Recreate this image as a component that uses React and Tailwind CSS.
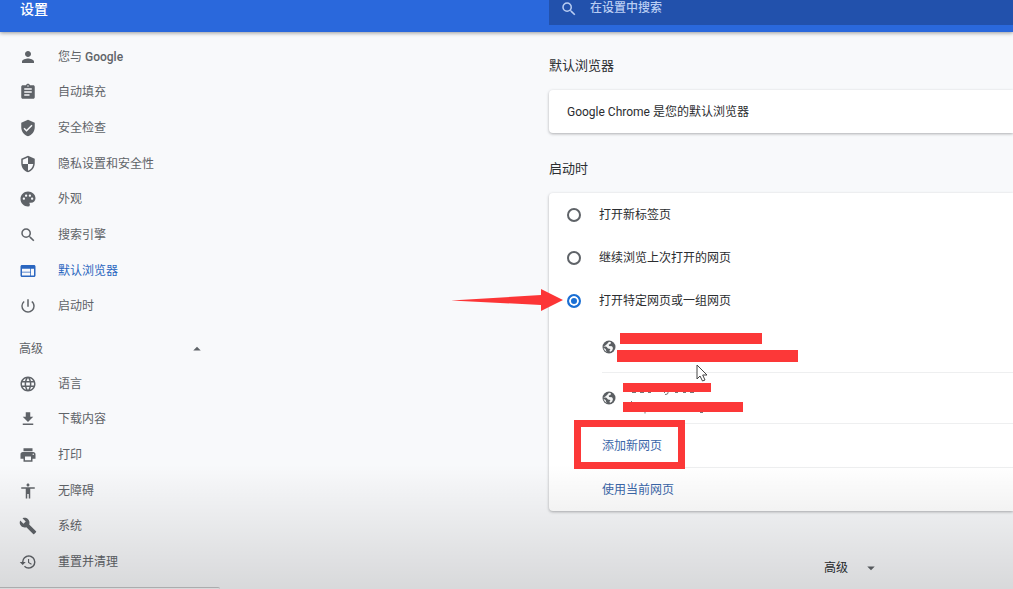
import { useState } from 'react';
import {
  MdAccessibility,
  MdArrowDropDown,
  MdArrowDropUp,
  MdAssignment,
  MdBuild,
  MdFileDownload,
  MdLanguage,
  MdPalette,
  MdPerson,
  MdPowerSettingsNew,
  MdPrint,
  MdRestore,
  MdSearch,
  MdSecurity,
  MdVerifiedUser,
  MdWeb,
} from 'react-icons/md';

const basicItems = [
  { id: 'people', label: <>您与 <span className="font-medium">Google</span></>, icon: MdPerson },
  { id: 'autofill', label: '自动填充', icon: MdAssignment },
  { id: 'safety', label: '安全检查', icon: MdVerifiedUser },
  { id: 'privacy', label: '隐私设置和安全性', icon: MdSecurity },
  { id: 'appearance', label: '外观', icon: MdPalette },
  { id: 'search', label: '搜索引擎', icon: MdSearch },
  { id: 'default', label: '默认浏览器', icon: MdWeb },
  { id: 'startup', label: '启动时', icon: MdPowerSettingsNew },
];

const advancedItems = [
  { id: 'languages', label: '语言', icon: MdLanguage },
  { id: 'downloads', label: '下载内容', icon: MdFileDownload },
  { id: 'printing', label: '打印', icon: MdPrint },
  { id: 'a11y', label: '无障碍', icon: MdAccessibility },
  { id: 'system', label: '系统', icon: MdBuild },
  { id: 'reset', label: '重置并清理', icon: MdRestore },
];

const startupOptions = ['打开新标签页', '继续浏览上次打开的网页', '打开特定网页或一组网页'];

// default favicon: dark globe with light land
function GlobeIcon() {
  return (
    <svg viewBox="0 0 14 14" className="size-[14px]" aria-hidden="true">
      <circle cx="7" cy="7" r="6.500" fill="#5a5e62" />
      <path d="M7 1.800 9 2.200 8.500 4 6.800 4.600 7 6l3 .3L11 8l-.8 2.500L8 12l-.5-1.500L8.500 9 6 8.500 4.500 6.800 1.800 6.200l-.2 1.500 2.200 1.500.4 1.800 1.300.9C3 11.500 1.400 9.300 1.500 6.800L4 5l1.500-1.500z" fill="#f4f5f5" />
    </svg>
  );
}

function MenuItem({ item, active }) {
  const Icon = item.icon;
  return (
    <li className="flex items-center">
      <a href={`#${item.id}`} className={`flex items-center gap-[21px] pl-[19px] ${active ? 'text-[#2a66c0]' : 'text-[#5f6368]'}`}>
        <Icon className="size-[18px]" />
        <span>{item.label}</span>
      </a>
    </li>
  );
}

export default function App() {
  const [startup, setStartup] = useState(2);

  return (
    <div className="relative min-h-screen overflow-hidden bg-[#f8f9fb] font-['Roboto','Noto_Sans_CJK_SC',sans-serif] text-xs leading-4 text-[#2b2d30]">
      <header className="grid h-8 grid-cols-[549px_1fr] items-start bg-[#2a68dc] shadow-[0_1px_4px_rgba(0,0,0,0.4)]">
        <h1 className="pl-5 text-sm leading-[18px] font-medium text-white">设置</h1>
        <label className="flex h-[25px] items-start gap-3 bg-[#2251ac] pl-[11px] text-[#b9cdf3]">
          <MdSearch className="size-[18px]" />
          <input type="search" aria-label="在设置中搜索" placeholder="在设置中搜索" className="h-4 flex-1 bg-transparent font-medium outline-none placeholder:text-[#b9cdf3]" />
        </label>
      </header>

      <div className="grid grid-cols-[549px_1fr]">
        <nav className="pt-[7px]">
          <ul className="grid h-[285px] auto-rows-fr">
            {basicItems.map(item => <MenuItem key={item.id} item={item} active={item.id === 'default'} />)}
          </ul>
          <button type="button" className="flex h-[42px] w-[206px] items-center justify-between pt-2 pl-[19px] text-[#5f6368]">
            高级
            <MdArrowDropUp className="size-[18px]" />
          </button>
          <ul className="grid h-[214px] auto-rows-fr">
            {advancedItems.map(item => <MenuItem key={item.id} item={item} />)}
          </ul>
        </nav>

        <main className="pt-6">
          <section>
            <h2 className="text-[13px] leading-5">默认浏览器</h2>
            <div className="mt-[14px] flex h-[43px] items-center rounded-l bg-white pl-[18px] shadow-[0_1px_3px_rgba(60,64,67,0.4)]">Google Chrome 是您的默认浏览器</div>
          </section>

          <section className="mt-[26px]">
            <h2 className="text-[13px] leading-5">启动时</h2>
            <div className="mt-[14px] rounded-l bg-white shadow-[0_1px_3px_rgba(60,64,67,0.4)]">
              <div className="relative">
                {startupOptions.map((option, i) => (
                  <label key={option} className="flex h-[43px] items-center gap-[18px] pl-[18px]">
                    <input
                      type="radio"
                      name="startup"
                      checked={startup === i}
                      onChange={() => setStartup(i)}
                      className="size-[14px] appearance-none rounded-full border-2 border-[#5f6368] checked:border-[#1a6fd4] checked:bg-[#1a6fd4] checked:shadow-[inset_0_0_0_2px_white]"
                    />
                    {option}
                  </label>
                ))}
                <svg viewBox="0 0 112 24" className="absolute bottom-[10px] -left-[98px] h-6 w-28" aria-hidden="true">
                  <path d="M0 12.500 90 7V1l22 11-22 11v-6z" fill="#fc3536" />
                </svg>
              </div>

              <div className="ml-[53px]">
                <div className="relative flex h-[51px] items-center border-b border-[#eeeff0]">
                  <GlobeIcon />
                  <div className="absolute top-[11px] left-[18px] h-[11px] w-[142px] bg-[#fc3838]" />
                  <div className="absolute top-7 left-[15px] h-3 w-[181px] bg-[#fc3838]" />
                </div>
                <div className="relative flex h-[51px] items-center border-b border-[#eeeff0]">
                  <GlobeIcon />
                  {/* edges of the covered address showing past the bars */}
                  <svg viewBox="0 0 90 30" className="absolute top-[17px] left-[27px] h-[30px] w-[90px]" fill="none" stroke="#777" aria-hidden="true">
                    <path d="M3 2.500h4M11 2.500h4M19 2.500h3M35 2.500h1M39 2v1q0 1.500-3 1.500M46 2.500h3M54 2.500h3M61 2.500h4M2.500 11v2M16 22v1.500M71 22.500h3" />
                  </svg>
                  <div className="absolute top-[10px] left-[21px] h-[9px] w-[88px] bg-[#fc3838]" />
                  <div className="absolute top-[29px] left-[21px] h-[10px] w-[120px] bg-[#fc3838]" />
                </div>
                <div className="relative flex h-11 items-center border-b border-[#eeeff0]">
                  <button type="button" className="text-[#3a66a8]">添加新网页</button>
                  <div className="absolute -top-1 -left-7 h-[49px] w-[111px] border-[7px] border-[#fc3838]" />
                </div>
                <div className="flex h-[43px] items-center">
                  <button type="button" className="text-[#3a66a8]">使用当前网页</button>
                </div>
              </div>
            </div>
          </section>

          <button type="button" className="mt-12 ml-[275px] flex items-center gap-[14px]">
            高级
            <MdArrowDropDown className="size-[18px] text-[#5f6368]" />
          </button>
        </main>
      </div>

      <div className="absolute bottom-0 left-0 h-0.5 w-[220px] rounded-tr border-t border-[#c4c5c7]" />
      <div className="pointer-events-none absolute inset-x-0 bottom-0 h-[125px] bg-linear-to-b from-transparent to-black/13" />
      <svg viewBox="0 0 12 18" className="absolute top-[364px] left-[696px] h-[18px] w-3" aria-hidden="true">
        <path d="M1 1v14l3-3 2.500 5 2.500-1-2.300-5H11z" fill="#fff" stroke="#444" />
      </svg>
    </div>
  );
}
